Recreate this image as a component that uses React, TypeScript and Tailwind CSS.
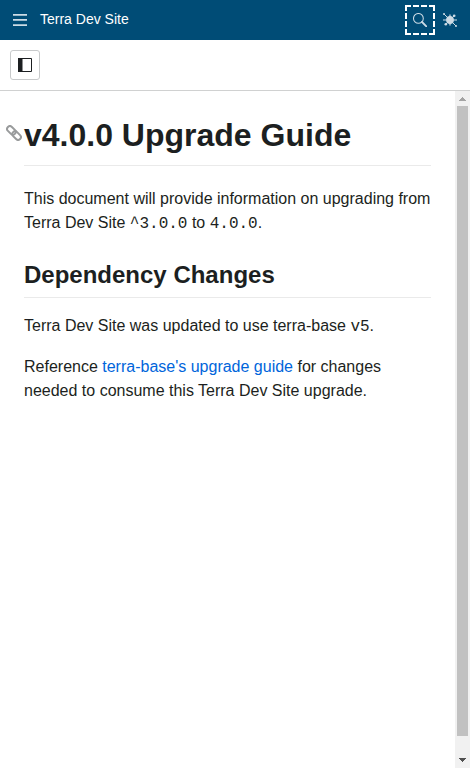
import React from 'react';

function MenuIcon() {
  return (
    <svg width="14" height="12" viewBox="0 0 14 12" fill="#ccdbe5" className="block">
      <path d="M0 0h14v1.700H0zM0 5.100h14v1.700H0zM0 10.300h14V12H0z" />
    </svg>
  );
}

function SearchIcon() {
  return (
    <svg width="14" height="14" viewBox="0 0 14 14" fill="none" stroke="#ccdbe5" className="block">
      <circle cx="5.400" cy="5.400" r="4.900" strokeWidth="1.050" />
      <path d="M9 9l4.300 4.300" strokeWidth="1.800" strokeLinecap="round" />
    </svg>
  );
}

function ThemeIcon() {
  return (
    <svg width="14" height="14" viewBox="0 0 14 14" fill="#ccdbe5" stroke="#ccdbe5" className="block">
      <circle cx="7" cy="7" r="3.900" stroke="none" />
      <path d="M1 1l12 12M3 11l8-8" strokeWidth="1" fill="none" />
      <path d="M7 1.500v11M0 7h14" strokeWidth="1.200" fill="none" />
      <g stroke="none">
        <circle cx="1" cy="1" r="1" />
        <circle cx="11.200" cy="2.800" r="1.300" />
        <circle cx="2.800" cy="11.200" r="1.300" />
        <circle cx="13" cy="13" r="1" />
      </g>
    </svg>
  );
}

function PanelIcon() {
  return (
    <svg width="14" height="14" viewBox="0 0 14 14" className="block">
      <path d="M0 0h4.500v14H0z" fill="#1c1f21" />
      <path d="M4 .5h9.500v13H4" fill="none" stroke="#1c1f21" />
    </svg>
  );
}

function LinkIcon() {
  return (
    <svg width="16" height="16" viewBox="0 0 16 16" className="block" fill="none" stroke="#999b9c" strokeWidth="2">
      <rect x="-4.900" y="-2.800" width="9.800" height="5.600" rx="2.800" transform="translate(5.400 5.400) rotate(45)" />
      <rect x="-4.900" y="-2.800" width="9.800" height="5.600" rx="2.800" transform="translate(10.600 10.600) rotate(45)" />
    </svg>
  );
}

function Scrollbar() {
  return (
    <div className="flex w-[15px] shrink-0 flex-col items-center bg-[#f1f1f1]">
      <div className="flex h-[15px] w-full items-center justify-center">
        <svg width="7" height="4" viewBox="0 0 7 4" fill="#a3a3a3" shapeRendering="crispEdges" className="block">
          <path d="M3 0h1v1h1v1h1v1h1v1H0V3h1V2h1V1h1z" />
        </svg>
      </div>
      <div className="h-[630px] w-[11px] bg-[#c1c1c1]" />
      <div className="mt-auto flex h-4 w-full items-center justify-center">
        <svg width="7" height="4" viewBox="0 0 7 4" fill="#505050" shapeRendering="crispEdges" className="block">
          <path d="M0 0h7v1H6v1H5v1H4v1H3V3H2V2H1V1H0z" />
        </svg>
      </div>
    </div>
  );
}

export default function App() {
  return (
    <div className="flex h-[768px] w-full flex-col overflow-hidden bg-white font-['Liberation_Sans',Arial,sans-serif] text-[#1c1f21]">
      <header className="flex h-10 shrink-0 items-center bg-[#004c76]">
        <button aria-label="Menu" className="flex h-10 w-10 items-center justify-center"><MenuIcon /></button>
        <span className="pb-0.5 text-sm text-white">Terra Dev Site</span>
        <button aria-label="Search" className="ml-auto flex size-[30px] items-center justify-center border-2 border-dashed border-white"><SearchIcon /></button>
        <button aria-label="Theme" className="mr-[5px] flex size-[30px] items-center justify-center"><ThemeIcon /></button>
      </header>
      <div className="flex h-[51px] shrink-0 items-center border-b border-[#d0d1d1] pl-2.5">
        <button aria-label="Toggle panel" className="flex size-[30px] items-center justify-center rounded-[3px] border border-[#c8cacb]"><PanelIcon /></button>
      </div>
      <div className="flex min-h-0 flex-1">
        <main className="min-w-0 flex-1 p-6 text-base leading-6">
          <h1 className="-ml-[18px] flex text-[32px] leading-10 font-bold">
            <span className="mt-2.5 mr-0.5 w-4 shrink-0"><LinkIcon /></span>
            <span className="flex-1 border-b border-[#eaeaea] pb-2.5">v4.0.0 Upgrade Guide</span>
          </h1>
          <p className="mt-[21px]">
            This document will provide information on upgrading from Terra Dev Site{' '}
            <code className="font-['Liberation_Mono',monospace] leading-none">^3.0.0</code> to{' '}
            <code className="font-['Liberation_Mono',monospace] leading-none">4.0.0</code>.
          </p>
          <h2 className="mt-[25px] border-b border-[#eaeaea] pb-[7px] text-2xl leading-[30px] font-bold">Dependency Changes</h2>
          <p className="mt-4">
            Terra Dev Site was updated to use terra-base{' '}
            <code className="font-['Liberation_Mono',monospace] leading-none">v5</code>.
          </p>
          <p className="mt-[17px]">
            Reference <a href="#guide" className="text-[#0065db]">terra-base's upgrade guide</a> for changes needed to consume this Terra Dev Site upgrade.
          </p>
        </main>
        <Scrollbar />
      </div>
    </div>
  );
}
